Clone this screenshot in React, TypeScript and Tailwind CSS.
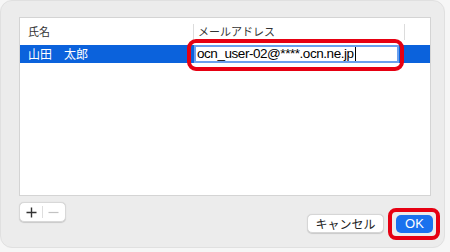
import React from "react";

const jp = { fontFamily: '"Noto Sans CJK JP", "Noto Sans", sans-serif' };
const latin = { fontFamily: 'Helvetica, "Liberation Sans", Arial, sans-serif' };

export default function App() {
  return (
    <div className="w-[450px] h-[252px] bg-[#f6f6f6] overflow-hidden">
      <div className="w-[445px] h-[248px] rounded-[12px] bg-[#ececec] border border-[#e0e0e0] pt-[16px] pl-[18px] flex flex-col">
        {/* table */}
        <div className="relative w-[412px] h-[179px] bg-white border border-[#d4d4d4]">
          <div className="h-[27px] flex items-center text-[11px] text-[#333]" style={jp}>
            <div className="w-[173px] pl-[8px]">氏名</div>
            <div className="w-px h-[16px] bg-[#dcdcdc]" />
            <div className="w-[210px] pl-[4px]">メールアドレス</div>
            <div className="w-px h-[16px] bg-[#dcdcdc]" />
          </div>
          <div className="h-[18px] bg-[#0b62dc] flex items-center">
            <div className="w-[173px] pl-[8px] text-[12px] text-white" style={jp}>
              山田　太郎
            </div>
            <div className="ml-px w-[205px] h-[18px] bg-white border-2 border-[#6aa0ee] flex items-center pl-[1px] text-[13.5px] text-black leading-none" style={latin}>
              <span className="tracking-[-0.45px]">ocn_user-02@****.ocn.ne.jp</span>
              <span className="inline-block w-px h-[14px] bg-black ml-[1px]" />
            </div>
          </div>
          <div className="absolute left-[167px] top-[21px] w-[217px] h-[32px] rounded-[9px] border-[4px] border-[#e60012]" />
        </div>
        {/* bottom */}
        <div className="flex justify-between items-start w-[414px]">
          <div className="mt-[6px] w-[47px] h-[20px] bg-white rounded-[5px] border border-[#d8d8d8] shadow-[0_0.5px_1px_rgba(0,0,0,0.15)] flex items-center">
            <div className="w-[23px] flex justify-center">
              <svg width="11" height="11" viewBox="0 0 11 11">
                <path d="M5.5 0.5V10.5M0.5 5.5H10.5" stroke="#333" strokeWidth="1.4" />
              </svg>
            </div>
            <div className="w-px h-[12px] bg-[#dedede]" />
            <div className="w-[23px] flex justify-center">
              <svg width="11" height="11" viewBox="0 0 11 11">
                <path d="M0.5 5.5H10.5" stroke="#c2c2c2" strokeWidth="1.2" />
              </svg>
            </div>
          </div>
          <div className="mt-[18px] flex items-center">
            <div className="w-[77px] h-[19px] bg-white rounded-[5px] border border-[#d6d6d6] shadow-[0_0.5px_1px_rgba(0,0,0,0.15)] flex items-center justify-center text-[12px] text-[#222]" style={jp}>
              キャンセル
            </div>
            <div className="relative ml-[12px]">
              <div className="w-[37px] h-[18px] bg-[#1a71ee] rounded-[5px] flex items-center justify-center text-[13px] text-white" style={latin}>
                OK
              </div>
              <div className="absolute left-[-8px] top-[-7px] w-[52px] h-[32px] rounded-[8px] border-[4px] border-[#e60012]" />
            </div>
          </div>
        </div>
      </div>
    </div>
  );
}
